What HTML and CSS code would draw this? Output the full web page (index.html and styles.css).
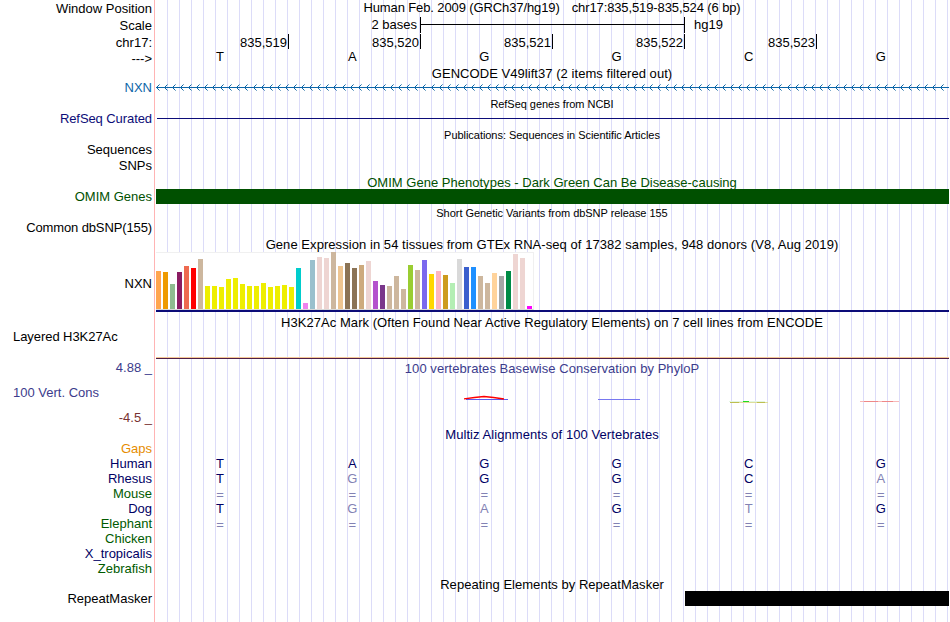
FILE: index.html
```html
<!DOCTYPE html>
<html lang="en">

<head>
    <meta charset="UTF-8">
    <meta name="viewport" content="width=device-width, initial-scale=1.0">
    <title>Human chr17:835,519-835,524 - Genome Browser</title>
    <link rel="stylesheet" href="styles.css">
</head>

<body>
    <div id="browser">
        <!-- left side labels -->
        <div id="labels">
            <div class="label ruler">Window Position</div>
            <div class="label ruler">Scale</div>
            <div class="label seq">chr17:</div>
            <div class="label seq">---&gt;</div>
            <div class="label gencode">NXN</div>
            <div class="label refseq">RefSeq Curated</div>
            <div class="label pubs">Sequences</div>
            <div class="label snps">SNPs</div>
            <div class="label omim">OMIM Genes</div>
            <div class="label dbsnp">Common dbSNP(155)</div>
            <div class="label gtex">NXN</div>
            <div class="label h3k left">Layered H3K27Ac</div>
            <div class="label cons-max">4.88 _</div>
            <div class="label cons left">100 Vert. Cons</div>
            <div class="label cons-min">-4.5 _</div>
            <div class="label gaps">Gaps</div>
            <div class="label navy">Human</div>
            <div class="label navy">Rhesus</div>
            <div class="label green">Mouse</div>
            <div class="label navy">Dog</div>
            <div class="label green">Elephant</div>
            <div class="label green">Chicken</div>
            <div class="label navy">X_tropicalis</div>
            <div class="label green">Zebrafish</div>
            <div class="label repeat">RepeatMasker</div>
        </div>

        <!-- track data -->
        <div id="data">
            <div class="position"><span>Human Feb. 2009 (GRCh37/hg19)</span><span>chr17:835,519-835,524 (6 bp)</span></div>
            <div class="scale">
                <span class="scale-text">2 bases</span>
                <div class="scale-bar"><div></div></div>
                <span>hg19</span>
            </div>
            <div class="ticks">
                <span>835,519</span><span>835,520</span><span>835,521</span><span>835,522</span><span>835,523</span>
            </div>
            <div class="bases"><span>T</span><span>A</span><span>G</span><span>G</span><span>C</span><span>G</span></div>

            <div class="title gencode-title">GENCODE V49lift37 (2 items filtered out)</div>
            <svg class="gencode-track" width="794" height="15">
                <path id="arrows" d="" />
                <path id="arrow-ends" d="" />
            </svg>

            <div class="title small">RefSeq genes from NCBI</div>
            <div class="refseq-track"></div>

            <div class="title small">Publications: Sequences in Scientific Articles</div>
            <div class="pubs-track"></div>

            <div class="title omim-title">OMIM Gene Phenotypes - Dark Green Can Be Disease-causing</div>
            <div class="omim-track"></div>

            <div class="title small">Short Genetic Variants from dbSNP release 155</div>
            <div class="dbsnp-track"></div>

            <div class="title gtex-title">Gene Expression in 54 tissues from GTEx RNA-seq of 17382 samples, 948 donors (V8, Aug 2019)</div>
            <div class="gtex-track">
                <div id="bars"></div>
            </div>

            <div class="title h3k-title">H3K27Ac Mark (Often Found Near Active Regulatory Elements) on 7 cell lines from ENCODE</div>
            <div class="h3k-track"></div>

            <div class="title cons-title">100 vertebrates Basewise Conservation by PhyloP</div>
            <svg class="cons-track" width="794" height="51">
                <path d="M311 23.5H353" stroke="#5a5af0" />
                <path d="M309 22.8Q320 21.2 329 20.5Q338 21.2 349 23" stroke="#ff0000" stroke-width="1.3" />
                <path d="M443 23.5H485" stroke="#7878f0" />
                <path d="M574 25.5H610" stroke="#e4f6e4" />
                <path d="M575 26.5H613" stroke="#dede9c" />
                <path d="M575 26.5H584M602 26.5H610" stroke="#bebe50" />
                <path d="M588 25.5H594" stroke="#1edc1e" />
                <path d="M705 25.5H744" stroke="#f8b8b8" />
                <path d="M709 25.5H723M727 25.5H738" stroke="#ee8888" />
            </svg>

            <div class="title multiz-title">Multiz Alignments of 100 Vertebrates</div>
            <div class="row"></div>
            <div class="row"><span>T</span><span>A</span><span>G</span><span>G</span><span>C</span><span>G</span></div>
            <div class="row"><span>T</span><span class="diff">G</span><span>G</span><span>G</span><span>C</span><span class="diff">A</span></div>
            <div class="row gap"><span>=</span><span>=</span><span>=</span><span>=</span><span>=</span><span>=</span></div>
            <div class="row"><span>T</span><span class="diff">G</span><span class="diff">A</span><span>G</span><span class="diff">T</span><span>G</span></div>
            <div class="row gap"><span>=</span><span>=</span><span>=</span><span>=</span><span>=</span><span>=</span></div>
            <div class="row"></div>
            <div class="row"></div>
            <div class="row"></div>

            <div class="title repeat-title">Repeating Elements by RepeatMasker</div>
            <div class="repeat-track"></div>
        </div>
    </div>
    <script src="script.js"></script>
</body>

</html>
```

FILE: styles.css
```css
body {
    margin: 0;
    background-color: #ffffff;
    color: #000000;
    font-family: "Liberation Sans", Arial, sans-serif;
    font-size: 13px;
    line-height: 15px;
}

#browser {
    display: flex;
    width: 949px;
    height: 622px;
    overflow: hidden;
    white-space: nowrap;
}

/* labels */
#labels {
    box-sizing: border-box;
    width: 155px;
    padding: 1px 2px 0 0;
    border-right: 1px solid #ffb4b4;
    text-align: right;
}

.label {
    height: 15px;
}

.left {
    padding-left: 13px;
    text-align: left;
}

.ruler {
    height: 17px;
}

.seq {
    height: 16px;
}

.gencode {
    margin-top: 13px;
    color: #0c66a8;
}

.refseq {
    margin-top: 16px;
    color: #0c0c78;
    letter-spacing: -0.08px;
}

.pubs {
    margin-top: 16px;
}

.snps {
    margin-top: 1px;
}

.omim {
    margin-top: 16px;
    color: #005000;
}

.dbsnp {
    margin-top: 16px;
    letter-spacing: -0.12px;
}

.gtex {
    margin-top: 41px;
}

.h3k {
    margin-top: 38px;
    letter-spacing: -0.06px;
}

.cons-max {
    margin-top: 16px;
    color: #3c3c8c;
}

.cons {
    margin-top: 10px;
    color: #3c3c8c;
}

.cons-min {
    margin-top: 10px;
    color: #783232;
}

.gaps {
    margin-top: 16px;
    color: #e68c00;
}

.navy {
    color: #000064;
}

.green {
    color: #005a00;
}

.repeat {
    margin-top: 15px;
}

/* data area with the blue guidelines */
#data {
    width: 794px;
    background: repeating-linear-gradient(to right, #dcdcf8 0, #dcdcf8 1px, transparent 1px, transparent 12px) 12px 0 no-repeat;
}

.position {
    display: flex;
    justify-content: center;
    gap: 12px;
    height: 17px;
    letter-spacing: -0.11px;
}

.scale {
    display: flex;
    height: 17px;
}

.scale-text {
    width: 262px;
    padding-right: 3px;
    text-align: right;
}

.scale-bar {
    width: 263px;
    height: 16px;
    margin-right: 9px;
    border-left: 1px solid #000000;
    border-right: 1px solid #000000;
}

.scale-bar div {
    height: 7px;
    border-bottom: 1px solid #000000;
}

.ticks {
    display: flex;
    height: 15px;
    padding-left: 2px;
}

.ticks span {
    box-sizing: border-box;
    width: 132px;
    padding: 1px 1px 0 0;
    border-right: 1px solid #000000;
    text-align: right;
}

.bases,
.row {
    display: grid;
    grid-template-columns: repeat(6, 132.15px);
    height: 15px;
    margin-left: -1px;
    text-align: center;
}

.bases {
    height: 17px;
}

.row {
    color: #000064;
}

.diff,
.gap {
    color: #8282b4;
}

.gap {
    line-height: 17px;
}

.title {
    height: 16px;
    text-align: center;
}

.small {
    font-size: 11px;
    line-height: 19px;
    letter-spacing: -0.04px;
}

.gencode-title {
    height: 14px;
    letter-spacing: 0.05px;
}

.gencode-track {
    display: block;
}

#arrows,
#arrow-ends {
    fill: none;
    stroke: #0c66a8;
}

#arrow-ends {
    stroke: #78a8c8;
}

.refseq-track {
    height: 7px;
    margin: 0 0 7px 2px;
    border-bottom: 1px solid #0c0c78;
}

.pubs-track {
    height: 31px;
}

.omim-title {
    line-height: 19px;
    color: #005000;
    letter-spacing: 0.02px;
}

.omim-track {
    height: 15px;
    margin-left: 1px;
    background-color: #005000;
}

.dbsnp-track {
    height: 15px;
}

.gtex-title {
    height: 17px;
    line-height: 20px;
    letter-spacing: 0.06px;
}

.gtex-track {
    height: 58px;
    margin: 0 0 3px 1px;
    border-bottom: 2px solid #0c0c78;
}

#bars {
    display: flex;
    align-items: flex-end;
    gap: 2px;
    box-sizing: border-box;
    width: 378px;
    height: 58px;
    background-color: #ffffff;
    border: solid #f0f0f0;
    border-width: 1px 1px 1px 0;
    border-bottom-color: #d8d8d8;
}

#bars div {
    flex: none;
    width: 5px;
}

.h3k-title {
    height: 14px;
    letter-spacing: 0.05px;
}

.h3k-track {
    height: 29px;
    margin: 0 0 2px 1px;
    border-bottom: 1px solid #501e46;
    box-shadow: inset 0 -1px #f5c896;
}

.cons-title {
    height: 15px;
    color: #3c3c8c;
    letter-spacing: 0.05px;
}

.cons-track {
    display: block;
    fill: none;
}

.multiz-title {
    height: 14px;
    color: #000064;
    letter-spacing: 0.07px;
}

.repeat-title {
    height: 15px;
    line-height: 18px;
    letter-spacing: 0.03px;
}

.repeat-track {
    height: 15px;
    margin-left: 530px;
    background-color: #000000;
}
```

FILE: script.js
```js
// GTEx tissues: [bar height, color]
var tissues = [
    [38, "#ffa54f"], [37, "#ee9a00"], [25, "#8fbc8f"], [37, "#8b1c62"], [43, "#ee6a50"], [41, "#ff0000"],
    [50, "#cdb79e"], [23, "#eeee00"], [23, "#eeee00"], [22, "#eeee00"], [30, "#eeee00"], [31, "#eeee00"],
    [25, "#eeee00"], [23, "#eeee00"], [23, "#eeee00"], [26, "#eeee00"], [22, "#eeee00"], [23, "#eeee00"],
    [24, "#eeee00"], [22, "#eeee00"], [41, "#00cdcd"], [6, "#ee82ee"], [49, "#9ac0cd"], [52, "#eed5d2"],
    [51, "#eed5d2"], [57, "#cdb79e"], [43, "#eec591"], [46, "#8b7355"], [41, "#8b7355"], [44, "#cdaa7d"],
    [48, "#eed5d2"], [28, "#b452cd"], [24, "#7a378b"], [23, "#cdb79e"], [33, "#cdb79e"], [20, "#cdb79e"],
    [44, "#9acd32"], [39, "#cdb79e"], [49, "#7b68ee"], [35, "#ffd700"], [38, "#ffb6c1"], [34, "#cd9b1d"],
    [26, "#b4eeb4"], [50, "#d9d9d9"], [42, "#3a5fcd"], [42, "#1e90ff"], [33, "#cdb79e"], [26, "#cdb79e"],
    [36, "#ffd39b"], [33, "#a6a6a6"], [38, "#008b45"], [55, "#eed5d2"], [51, "#eed5d2"], [3, "#ff00ff"]
];

var bars = document.getElementById("bars");
for (var i = 0; i < tissues.length; i++) {
    var bar = document.createElement("div");
    bar.style.height = tissues[i][0] + "px";
    bar.style.backgroundColor = tissues[i][1];
    bars.appendChild(bar);
}

// strand arrows on the gene line, stepped one pixel row at a time
var d = "M1 7.5H794";
var ends = "";
for (var j = 0; j < 98; j++) {
    var x = Math.floor(2 + j * 8.09);
    d += "M" + x + " 6.5h1M" + x + " 8.5h1";
    d += "M" + (x + 1) + " 5.5h1M" + (x + 1) + " 9.5h1";
    ends += "M" + (x + 2) + " 4.5h1M" + (x + 2) + " 10.5h1";
}
document.getElementById("arrows").setAttribute("d", d);
document.getElementById("arrow-ends").setAttribute("d", ends);
```
